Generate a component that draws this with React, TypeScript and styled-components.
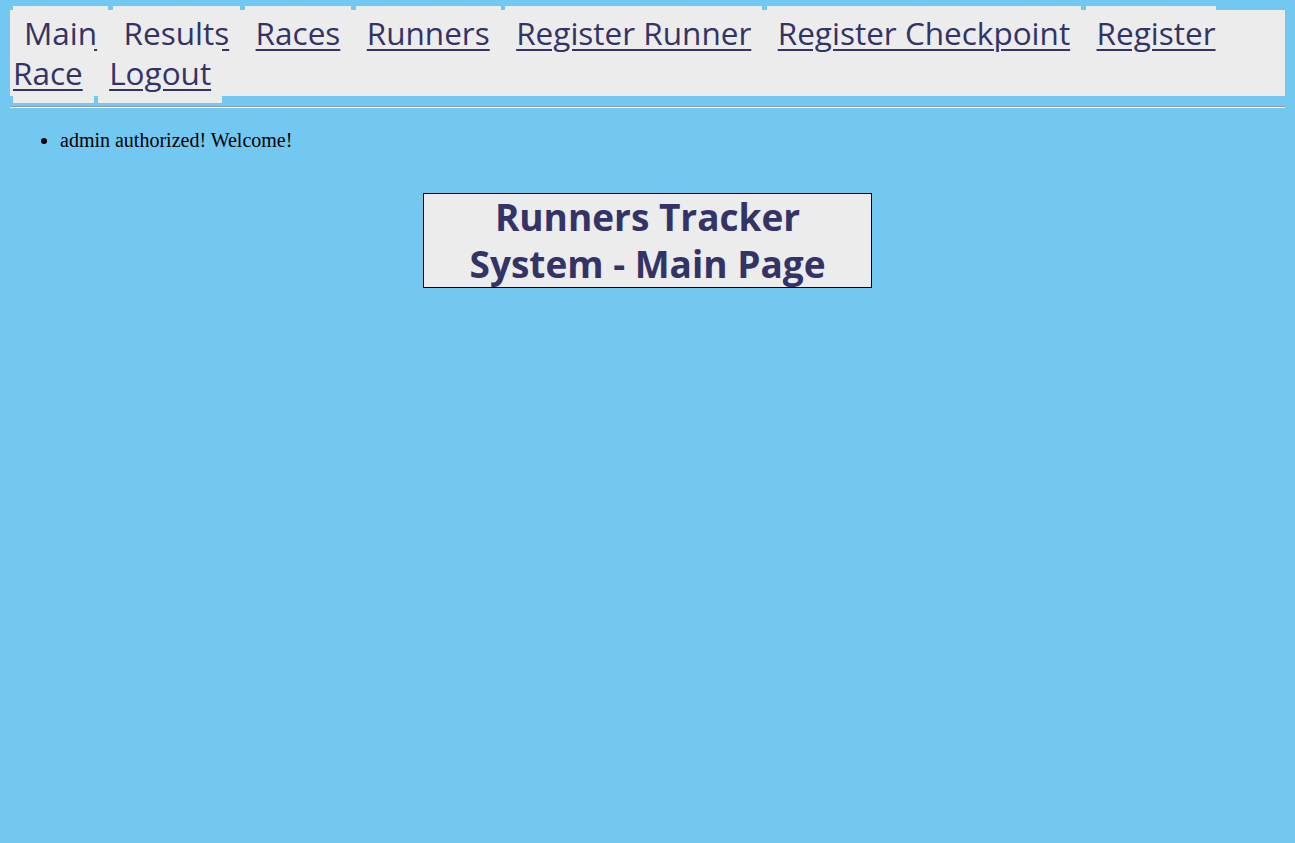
import React from 'react';
import styled, { createGlobalStyle } from 'styled-components';

const GlobalStyle = createGlobalStyle`
  html, body {
    margin: 0;
    background-color: #72c8f1;
  }
`;

const Page = styled.div`
  padding: 0 10px;
  font-family: 'Liberation Serif', serif;
`;

const NavList = styled.ul`
  margin: 10px 0 0;
  padding: 3px;
  list-style: none;
  background-color: #ececec;
  font-family: 'Open Sans', sans-serif;
  font-size: 17px;
  line-height: 17px;
`;

/* inline items: the second row's boxes paint over the first row's underlines */
const NavItem = styled.li`
  display: inline;
  padding: 5px 11px 9px;
  background-color: #ececec;
  font-size: 31.5px;
  line-height: 40px;
`;

const NavLink = styled.a`
  color: #333366;
  text-decoration: underline;
  text-decoration-thickness: 2px;
  text-underline-offset: 4px;
  cursor: pointer;
`;

const Rule = styled.hr`
  margin: 10px 0 0;
  border: 0;
  border-top: 1px solid #9a9a9a;
  border-bottom: 1px solid #f4f4f4;
`;

const Messages = styled.ul`
  margin: 21px 0 20px;
  padding-left: 50px;
  font-size: 20px;
  line-height: 23px;
  color: #000;
`;

const Title = styled.h1`
  width: 447px;
  margin: 41px auto 0;
  border: 1px solid #000;
  background-color: #ececec;
  color: #333366;
  font-family: 'Open Sans', sans-serif;
  font-weight: bold;
  font-size: 37px;
  line-height: 46.5px;
  text-align: center;
`;

const links = [
  'Main',
  'Results',
  'Races',
  'Runners',
  'Register Runner',
  'Register Checkpoint',
  'Register Race',
  'Logout',
];

const App = () => {
  return (
    <Page>
      <GlobalStyle />
      <NavList>
        {links.map((label, i) => (
          <React.Fragment key={label}>
            {i > 0 && ' '}
            <NavItem>
              <NavLink>{label}</NavLink>
            </NavItem>
          </React.Fragment>
        ))}
      </NavList>
      <Rule />
      <Messages>
        <li>admin authorized! Welcome!</li>
      </Messages>
      <Title>
        Runners Tracker
        <br />
        System - Main Page
      </Title>
    </Page>
  );
};

export default App;
